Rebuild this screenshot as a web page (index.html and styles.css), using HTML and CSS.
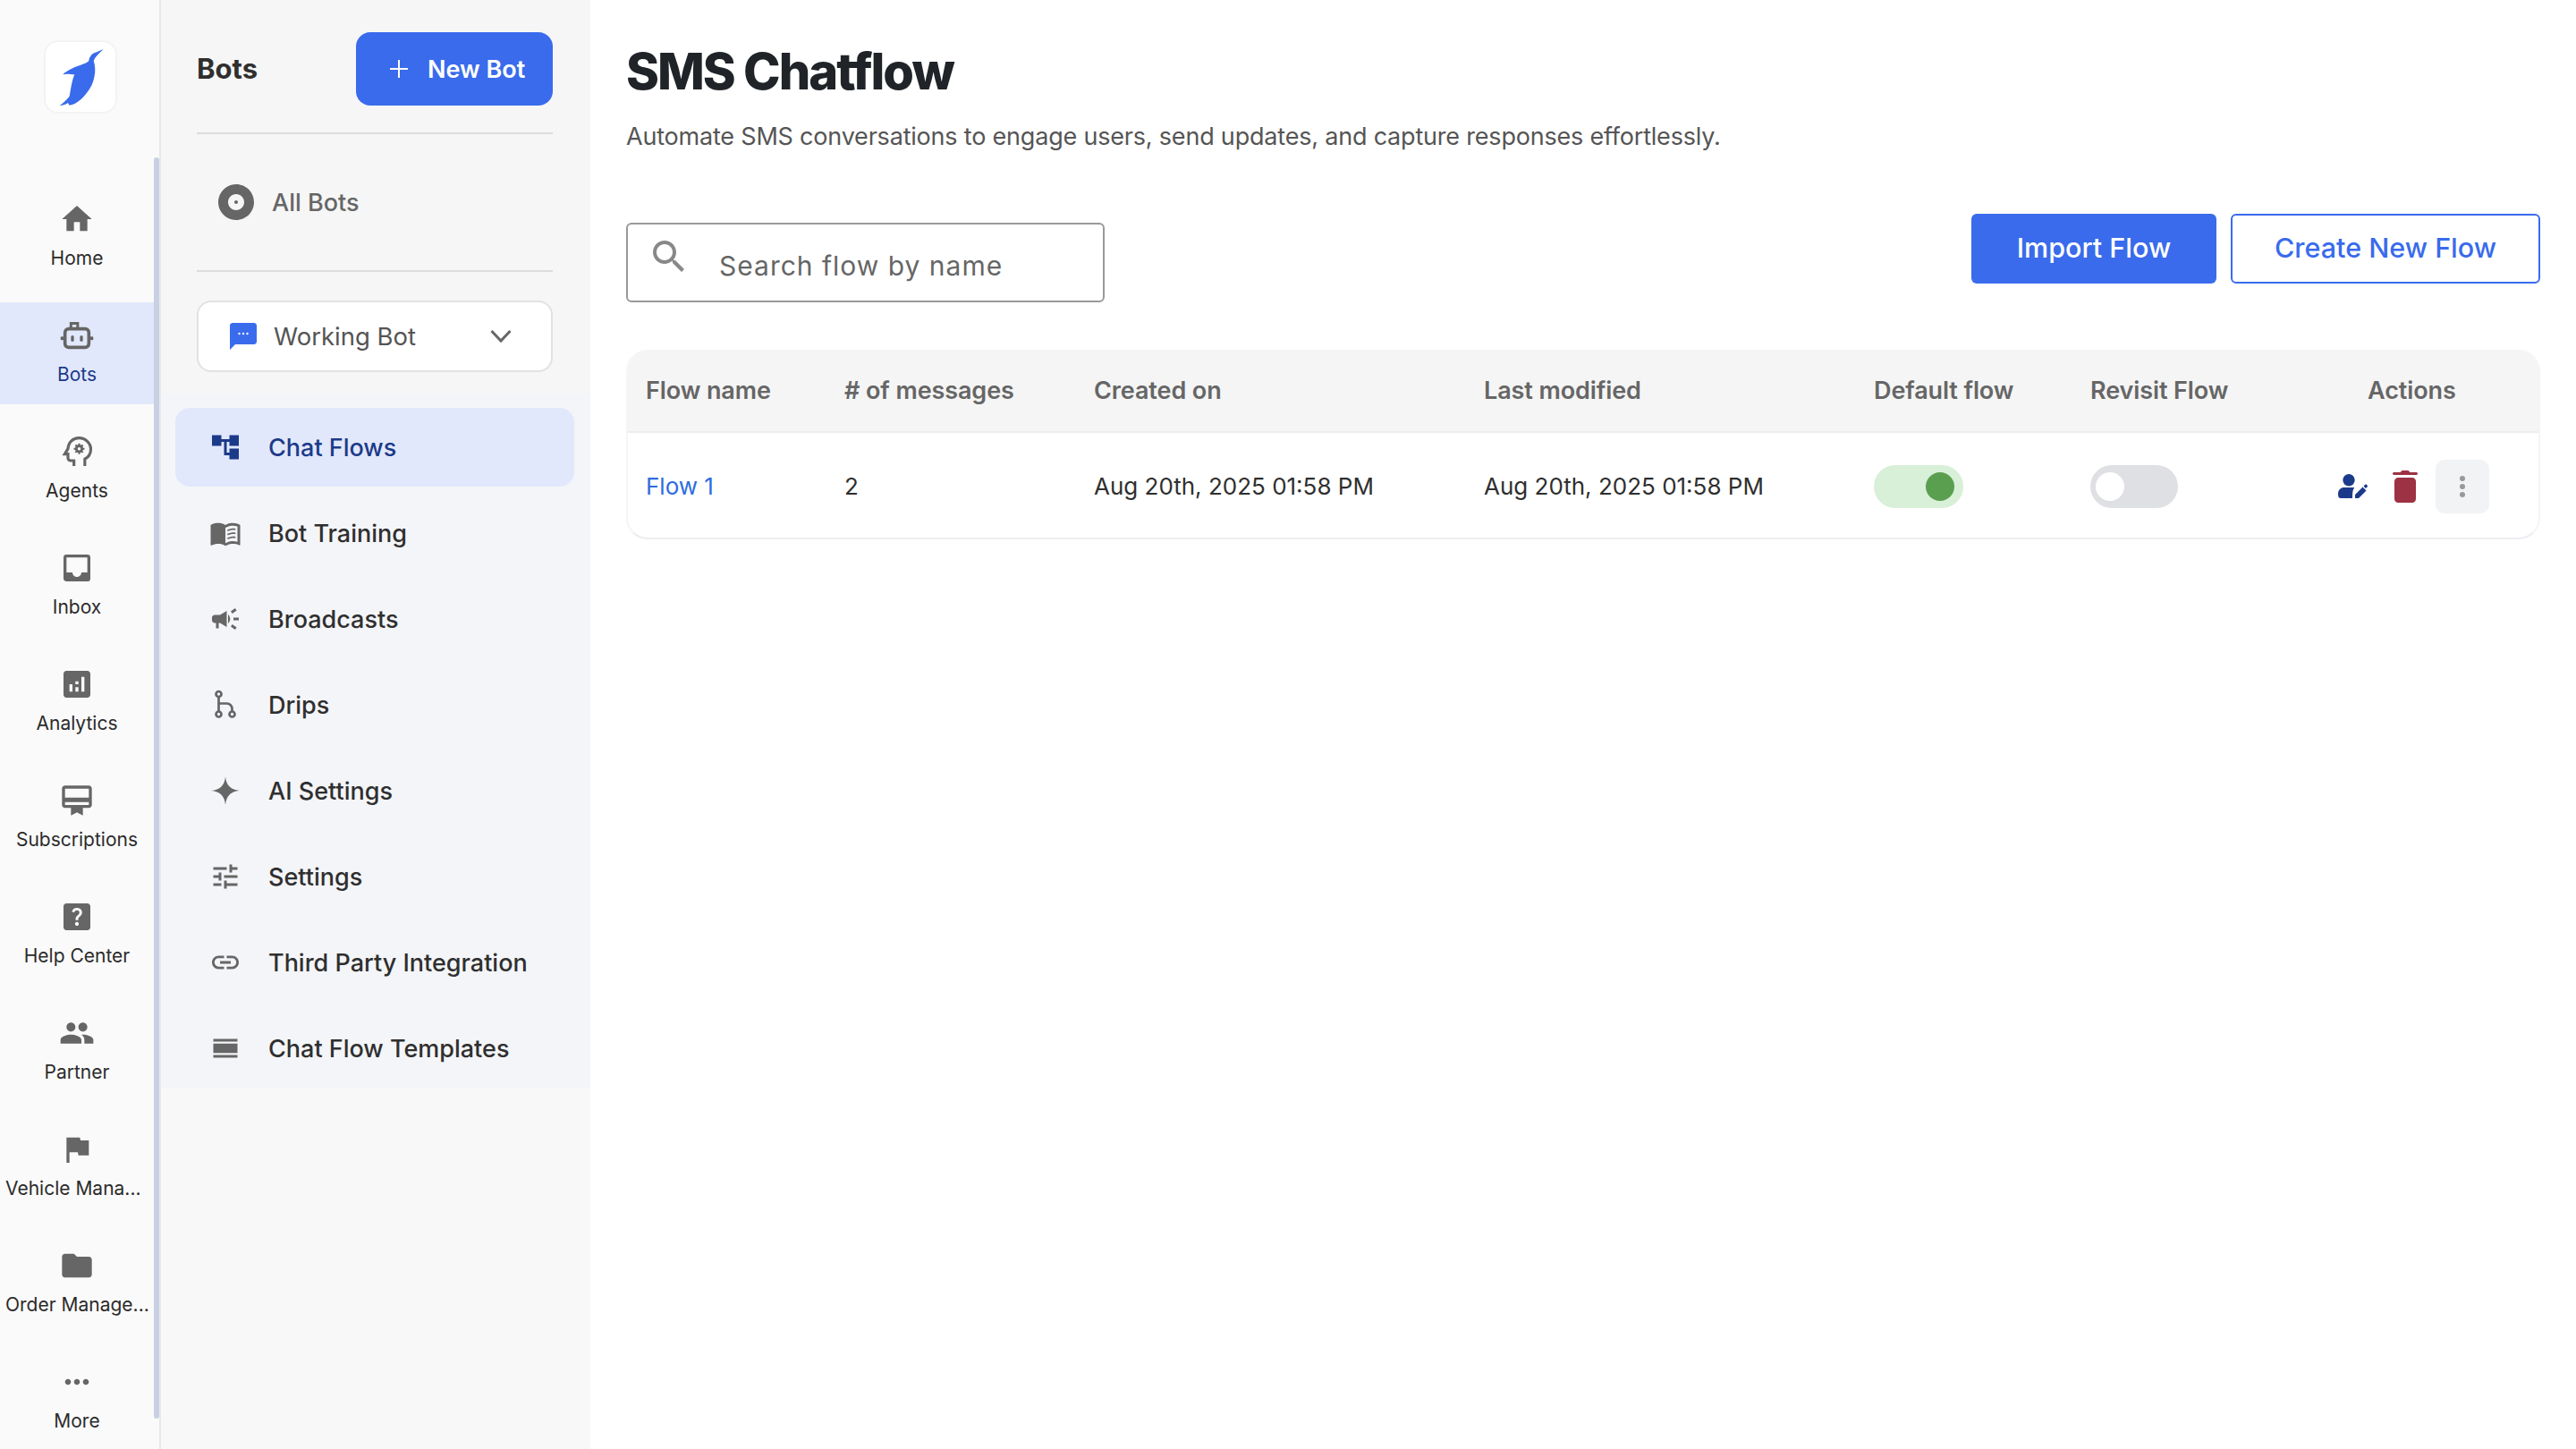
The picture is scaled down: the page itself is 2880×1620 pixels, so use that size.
FILE: index.html
```html
<!DOCTYPE html>
<html lang="en">
<head>
    <meta charset="UTF-8">
    <title>SMS Chatflow</title>
    <link rel="stylesheet" href="styles.css">
</head>
<body>
    <div class="app">
        <!-- Icon rail -->
        <aside class="rail">
            <div class="logo">
                <svg viewBox="88 75 242 245" width="81" height="81"><path fill="#396bec" d="M285 102 L262 112 C248 115 238 125 235 143 C225 152 190 160 170 172 C160 178 152 183 148 188 C158 185 170 186 187 188 C178 210 175 235 170 262 C160 275 148 285 137 293 C150 292 158 290 165 284 L170 292 C195 290 225 262 245 225 C258 195 260 165 252 143 C255 130 268 118 285 102 Z"/></svg>
            </div>
            <nav class="rail-nav">
                <a class="rail-item"><svg class="rail-icon" viewBox="0 0 24 24"><path d="M10 20v-6h4v6h5v-8h3L12 3 2 12h3v8z"/></svg><span class="rail-label">Home</span></a>
                <a class="rail-item active"><svg class="rail-icon" viewBox="0 0 24 24"><path fill="none" stroke="#666" stroke-width="1.800" d="M8 7.500V3.900h4.500v3.600"/><rect x="4" y="7.600" width="16" height="12.400" rx="2.500" fill="none" stroke="#666" stroke-width="2.200"/><rect x="8" y="12" width="2" height="4.200" rx="1"/><rect x="14" y="12" width="2" height="4.200" rx="1"/><rect x="1" y="12.800" width="2.200" height="2.400" rx=".8"/><rect x="20.800" y="12.800" width="2.200" height="2.400" rx=".8"/></svg><span class="rail-label">Bots</span></a>
                <a class="rail-item"><svg class="rail-icon" viewBox="0 0 24 24"><path fill="none" stroke="#666" stroke-width="1.900" d="M10 21.600V18H7.800C6.800 18 6 17.200 6 16.200V13.600H3.800L6 10C6.300 5.500 9.500 2.800 13.300 2.800c4.300 0 8 3.300 8 7.600 0 2.900-1.600 5.300-4 6.500v4.700"/><circle cx="13.500" cy="10" r="1.900" fill="none" stroke="#666" stroke-width="1.700"/><path fill="none" stroke="#666" stroke-width="1.200" d="M13.500 6.400v1.300M13.500 12.300v1.300M9.900 10h1.300M15.800 10h1.300M11 7.500l.9.900M15.100 11.600l.9.900M16 7.500l-.9.900M11.900 11.600l-.9.900"/></svg><span class="rail-label">Agents</span></a>
                <a class="rail-item"><svg class="rail-icon" viewBox="0 0 24 24"><path d="M19 3H5a2 2 0 0 0-2 2v14c0 1.100.9 2 2 2h14a2 2 0 0 0 2-2V5a2 2 0 0 0-2-2zm0 12h-4c0 1.660-1.340 3-3 3s-3-1.340-3-3H5V5h14v10z"/></svg><span class="rail-label">Inbox</span></a>
                <a class="rail-item"><svg class="rail-icon" viewBox="0 0 24 24"><path d="M19 3H5c-1.100 0-2 .9-2 2v14c0 1.100.9 2 2 2h14c1.100 0 2-.9 2-2V5c0-1.100-.9-2-2-2zM9 17H7v-5h2v5zm4 0h-2v-3h2v3zm0-5h-2v-2h2v2zm4 5h-2V7h2v10z"/></svg><span class="rail-label">Analytics</span></a>
                <a class="rail-item"><svg class="rail-icon" viewBox="0 0 24 24"><path d="M20 2H4c-1.110 0-2 .89-2 2v11c0 1.110.89 2 2 2h4v5l4-2 4 2v-5h4c1.110 0 2-.89 2-2V4c0-1.110-.89-2-2-2zm0 13H4v-2h16v2zm0-5H4V4h16v6z"/></svg><span class="rail-label">Subscriptions</span></a>
                <a class="rail-item"><svg class="rail-icon" viewBox="0 0 24 24"><path d="M19 3H5c-1.100 0-2 .9-2 2v14c0 1.100.9 2 2 2h14c1.100 0 2-.9 2-2V5c0-1.100-.9-2-2-2zm-6.990 15c-.7 0-1.260-.56-1.260-1.260 0-.71.56-1.250 1.260-1.250.71 0 1.250.54 1.250 1.250-.01.69-.54 1.260-1.250 1.260zm3.010-7.400c-.76 1.110-1.480 1.460-1.870 2.170-.16.29-.22.48-.22 1.410h-1.820c0-.49-.08-1.290.31-1.980.49-.87 1.420-1.390 1.960-2.160.57-.81.25-2.330-1.370-2.330-1.060 0-1.580.8-1.800 1.480l-1.650-.7C9.010 7.150 10.220 6 11.990 6c1.480 0 2.490.67 3.010 1.520.44.72.7 2.070.03 3.080z"/></svg><span class="rail-label">Help Center</span></a>
                <a class="rail-item"><svg class="rail-icon" viewBox="0 0 24 24"><path d="M16 11c1.660 0 2.990-1.340 2.990-3S17.660 5 16 5c-1.660 0-3 1.340-3 3s1.340 3 3 3zm-8 0c1.660 0 2.990-1.340 2.990-3S9.660 5 8 5C6.340 5 5 6.340 5 8s1.340 3 3 3zm0 2c-2.330 0-7 1.170-7 3.500V19h14v-2.500c0-2.330-4.670-3.500-7-3.500zm8 0c-.29 0-.62.02-.97.05 1.160.84 1.970 1.970 1.970 3.450V19h6v-2.500c0-2.330-4.670-3.500-7-3.500z"/></svg><span class="rail-label">Partner</span></a>
                <a class="rail-item"><svg class="rail-icon" viewBox="0 0 24 24"><path d="M14.400 6L14 4H5v17h2v-7h5.600l.4 2h7V6z"/></svg><span class="rail-label left">Vehicle Mana...</span></a>
                <a class="rail-item"><svg class="rail-icon" viewBox="0 0 24 24"><path d="M10 4H4c-1.100 0-1.990.9-1.990 2L2 18c0 1.100.9 2 2 2h16c1.100 0 2-.9 2-2V8c0-1.100-.9-2-2-2h-8l-2-2z"/></svg><span class="rail-label left">Order Manage...</span></a>
                <a class="rail-item"><svg class="rail-icon" viewBox="0 0 24 24"><path d="M6 10c-1.100 0-2 .9-2 2s.9 2 2 2 2-.9 2-2-.9-2-2-2zm12 0c-1.100 0-2 .9-2 2s.9 2 2 2 2-.9 2-2-.9-2-2-2zm-6 0c-1.100 0-2 .9-2 2s.9 2 2 2 2-.9 2-2-.9-2-2-2z"/></svg><span class="rail-label">More</span></a>
            </nav>
            <div class="rail-thumb"></div>
        </aside>

        <!-- Bot sidebar -->
        <aside class="sidebar">
            <div class="sidebar-top">
                <div class="sidebar-head">
                    <h2>Bots</h2>
                    <button class="new-bot" type="button">
                        <svg viewBox="0 0 20 20" width="20" height="20"><path fill="none" stroke="#fff" stroke-width="2" d="M10 0v20M0 10h20"/></svg>
                        New Bot
                    </button>
                </div>
                <a class="all-bots">
                    <svg viewBox="0 0 24 24" width="48" height="48"><path fill="#666" d="M12 2C6.480 2 2 6.480 2 12s4.480 10 10 10 10-4.480 10-10S17.520 2 12 2zm0 14.500c-2.490 0-4.500-2.010-4.500-4.500S9.510 7.500 12 7.500s4.500 2.010 4.500 4.500-2.010 4.500-4.500 4.500zm0-5.500c-.55 0-1 .45-1 1s.45 1 1 1 1-.45 1-1-.45-1-1-1z"/></svg>
                    All Bots
                </a>
                <div class="bot-select">
                    <svg viewBox="0 0 24 24" width="36" height="36"><path fill="#396bec" d="M20 2H4c-1.100 0-1.990.9-1.990 2L2 22l4-4h14c1.100 0 2-.9 2-2V4c0-1.100-.9-2-2-2z"/><circle cx="9" cy="10" r=".8" fill="#fff"/><circle cx="12" cy="10" r=".8" fill="#fff"/><circle cx="15" cy="10" r=".8" fill="#fff"/></svg>
                    <span class="bot-name">Working Bot</span>
                    <svg viewBox="0 0 24 16" width="24" height="16"><path fill="none" stroke="#666" stroke-width="3" d="M1.500 2L12 13 22.500 2"/></svg>
                </div>
            </div>
            <nav class="menu">
                <a class="menu-item active"><svg class="menu-icon" viewBox="0 0 24 24"><path d="M22 11V3h-7v3H9V3H2v8h7V8h2v10h4v3h7v-8h-7v3h-2V8h2v3z"/></svg>Chat Flows</a>
                <a class="menu-item"><svg class="menu-icon" viewBox="0 0 24 24"><path d="M21 5c-1.110-.35-2.330-.5-3.500-.5-1.950 0-4.050.4-5.500 1.500-1.450-1.100-3.550-1.500-5.500-1.500S2.450 4.900 1 6v14.650c0 .25.25.5.5.5.1 0 .15-.05.25-.05C3.100 20.450 5.050 20 6.500 20c1.950 0 4.050.4 5.500 1.500 1.350-.85 3.800-1.500 5.500-1.500 1.650 0 3.350.3 4.750 1.050.1.05.15.05.25.05.25 0 .5-.25.5-.5V6c-.6-.45-1.250-.75-2-1zm0 13.500c-1.100-.35-2.300-.5-3.500-.5-1.700 0-4.150.65-5.500 1.500V8c1.350-.85 3.800-1.500 5.500-1.500 1.200 0 2.400.15 3.500.5v11.500z"/><path d="M13.500 9.500c1.500-.8 4.500-1.300 6-.9v1.200c-1.700-.4-4.500.1-6 .9zm0 3c1.500-.8 4.500-1.300 6-.9v1.200c-1.700-.4-4.500.1-6 .9zm0 3c1.500-.8 4.500-1.300 6-.9v1.200c-1.700-.4-4.500.1-6 .9z"/></svg>Bot Training</a>
                <a class="menu-item"><svg class="menu-icon" viewBox="0 0 24 24"><path d="M18 11v2h4v-2h-4zm-2 6.610c.96.71 2.210 1.650 3.200 2.390.4-.53.8-1.070 1.200-1.600-.99-.74-2.240-1.680-3.200-2.400-.4.54-.8 1.080-1.200 1.610zM20.400 5.600c-.4-.53-.8-1.070-1.200-1.600-.99.74-2.240 1.680-3.200 2.400.4.53.8 1.070 1.200 1.600.96-.72 2.210-1.650 3.200-2.400zM4 9c-1.100 0-2 .9-2 2v2c0 1.100.9 2 2 2h1v4h2v-4h1l5 3V6L8 9H4zm11.500 3c0-1.330-.58-2.530-1.500-3.350v6.690c.92-.81 1.500-2.010 1.500-3.340z"/></svg>Broadcasts</a>
                <a class="menu-item"><svg class="menu-icon" viewBox="0 0 24 24"><g fill="none" stroke="#666" stroke-width="1.800"><circle cx="7" cy="4" r="2"/><circle cx="7" cy="19" r="2"/><circle cx="17" cy="19" r="2"/><path d="M7 6v11M7 11h6a4 4 0 0 1 4 4v2"/></g></svg>Drips</a>
                <a class="menu-item"><svg class="menu-icon" viewBox="0 0 24 24"><path d="M12 1.500C12.600 8 16 11.400 22.500 12 16 12.600 12.600 16 12 22.500 11.400 16 8 12.600 1.500 12 8 11.400 11.400 8 12 1.500z"/></svg>AI Settings</a>
                <a class="menu-item"><svg class="menu-icon" viewBox="0 0 24 24"><path d="M3 17v2h6v-2H3zM3 5v2h10V5H3zm10 16v-2h8v-2h-8v-2h-2v6h2zM7 9v2H3v2h4v2h2V9H7zm14 4v-2H11v2h10zm-6-4h2V7h4V5h-4V3h-2v6z"/></svg>Settings</a>
                <a class="menu-item"><svg class="menu-icon" viewBox="0 0 24 24"><path d="M3.900 12c0-1.710 1.390-3.100 3.100-3.100h4V7H7c-2.760 0-5 2.240-5 5s2.240 5 5 5h4v-1.900H7c-1.710 0-3.100-1.390-3.100-3.100zM8 13h8v-2H8v2zm9-6h-4v1.900h4c1.710 0 3.100 1.390 3.100 3.100s-1.390 3.100-3.100 3.100h-4V17h4c2.760 0 5-2.240 5-5s-2.240-5-5-5z"/></svg>Third Party Integration</a>
                <a class="menu-item"><svg class="menu-icon" viewBox="0 0 24 24"><rect x="3" y="5" width="18" height="2"/><rect x="3" y="8.500" width="18" height="7"/><rect x="3" y="17" width="18" height="2"/></svg>Chat Flow Templates</a>
            </nav>
        </aside>

        <!-- Main content -->
        <main class="main">
            <h1>SMS Chatflow</h1>
            <p class="subtitle">Automate SMS conversations to engage users, send updates, and capture responses effortlessly.</p>

            <div class="toolbar">
                <label class="search">
                    <svg viewBox="0 0 24 24" width="48" height="48"><path fill="#888" d="M15.500 14h-.79l-.28-.27C15.410 12.590 16 11.110 16 9.500 16 5.910 13.090 3 9.500 3S3 5.910 3 9.500 5.910 16 9.500 16c1.610 0 3.090-.59 4.230-1.570l.27.28v.79l5 4.990L20.490 19l-4.990-5zm-6 0C7.010 14 5 11.990 5 9.500S7.010 5 9.500 5 14 7.010 14 9.500 11.990 14 9.500 14z"/></svg>
                    <input type="text" placeholder="Search flow by name">
                </label>
                <div class="toolbar-buttons">
                    <button class="btn btn-primary" type="button">Import Flow</button>
                    <button class="btn btn-outline" type="button">Create New Flow</button>
                </div>
            </div>

            <div class="table-wrap">
                <table class="flows">
                    <thead>
                        <tr>
                            <th class="col-name">Flow name</th>
                            <th class="col-count"># of messages</th>
                            <th class="col-date">Created on</th>
                            <th class="col-date">Last modified</th>
                            <th class="col-default">Default flow</th>
                            <th class="col-revisit">Revisit Flow</th>
                            <th class="col-actions">Actions</th>
                        </tr>
                    </thead>
                    <tbody>
                        <tr>
                            <td><a class="flow-link">Flow 1</a></td>
                            <td>2</td>
                            <td>Aug 20th, 2025 01:58 PM</td>
                            <td>Aug 20th, 2025 01:58 PM</td>
                            <td><span class="toggle on"><span class="knob"></span></span></td>
                            <td><span class="toggle"><span class="knob"></span></span></td>
                            <td class="cell-actions">
                                <div class="actions">
                                    <svg viewBox="0 0 33 27" width="33" height="27"><circle cx="12" cy="6.700" r="6.700" fill="#1c3a8a"/><path fill="#1c3a8a" d="M0 22.500C0 17.500 3 15 7 15h11.500c-1.500 1.500-2.500 4-2.500 12H3c-2 0-3-1.500-3-4.500z"/><path fill="#1c3a8a" d="M19 27v-4l8.500-8.500 4 4L23 27zM28.500 13.500l1.500-1.500c.6-.6 1.400-.6 2 0l.5.5c.6.6.6 1.400 0 2l-1.500 1.500z"/></svg>
                                    <svg viewBox="0 0 28 36" width="28" height="36"><path fill="#9c3243" d="M9 2c0-1 1-2 2-2h6c1 0 2 1 2 2h7.500c.8 0 1.500.7 1.500 1.500S27.300 5 26.500 5h-25C.7 5 0 4.300 0 3.500S.7 2 1.500 2zM6 8h16c2 0 4 2 4 4v20c0 2-2 4-4 4H6c-2 0-4-2-4-4V12c0-2 2-4 4-4z"/></svg>
                                    <span class="kebab"><i></i><i></i><i></i></span>
                                </div>
                            </td>
                        </tr>
                    </tbody>
                </table>
            </div>
        </main>
    </div>
</body>
</html>
```

FILE: styles.css
```css
* {
    box-sizing: border-box;
}
html, body {
    margin: 0;
    height: 100%;
    overflow: hidden;
}
body {
    background-color: #fff;
    color: #2f2f2f;
    font-family: 'Inter', 'Liberation Sans', sans-serif;
}
h1, h2, p {
    margin: 0;
}
.app {
    display: flex;
    height: 1620px;
}

/* Icon rail */
.rail {
    position: relative;
    flex: 0 0 180px;
    background-color: #fafafa;
    border-right: 2px solid #e8e8e8;
}
.logo {
    display: flex;
    align-items: center;
    justify-content: center;
    width: 82px;
    height: 82px;
    margin: 45px 0 81px 49px;
    background-color: #fff;
    border: 2px solid #f3f3f3;
    border-radius: 16px;
}
.logo svg {
    flex: none;
}
.rail-nav {
    display: flex;
    flex-direction: column;
    gap: 16px;
    width: 172px;
}
.rail-item {
    display: flex;
    flex-direction: column;
    align-items: center;
    height: 114px;
    padding: 17px 0 0 6px;
}
.rail-item.active {
    background-color: #e2e8fb;
}
.rail-icon {
    flex: none;
    width: 40px;
    height: 40px;
    margin-right: 6px;
    fill: #666;
}
.rail-label {
    width: 100%;
    padding-right: 6px;
    margin-top: 8px;
    font-size: 21px;
    line-height: 32px;
    color: #2b2b2b;
    text-align: center;
    white-space: nowrap;
}
.rail-label.left {
    padding-right: 0;
    text-align: left;
}
.rail-item.active .rail-label {
    color: #1c3a8a;
}
.rail-thumb {
    position: absolute;
    top: 176px;
    left: 172px;
    width: 6px;
    height: 1410px;
    background-color: #c8d0e4;
    border-radius: 4px;
}

/* Bot sidebar */
.sidebar {
    flex: 0 0 480px;
    background-color: #f8f8f8;
}
.sidebar-top {
    height: 440px;
    padding: 36px 42px 0 40px;
    background-color: #f6f6f6;
}
.sidebar-head {
    display: flex;
    align-items: center;
    justify-content: space-between;
    padding-bottom: 30px;
    border-bottom: 2px solid #dcdcdc;
}
.sidebar-head h2 {
    margin-top: -2px;
    font-size: 31px;
    font-weight: 700;
    color: #2f2f2f;
}
.new-bot {
    display: flex;
    align-items: center;
    gap: 22px;
    width: 220px;
    height: 82px;
    padding-left: 38px;
    font: 600 27px 'Inter', sans-serif;
    color: #fff;
    background-color: #396bec;
    border: none;
    border-radius: 16px;
}
.all-bots {
    display: flex;
    align-items: center;
    gap: 16px;
    height: 154px;
    padding-left: 20px;
    font-size: 27px;
    font-weight: 500;
    color: #666;
    border-bottom: 2px solid #dcdcdc;
}
.bot-select {
    display: flex;
    align-items: center;
    height: 80px;
    margin-top: 32px;
    padding: 0 44px 0 32px;
    background-color: #fff;
    border: 2px solid #e2e2e2;
    border-radius: 16px;
}
.bot-name {
    flex: 1;
    margin-left: 16px;
    font-size: 27.500px;
    color: #555;
}
.menu {
    display: flex;
    flex-direction: column;
    gap: 8px;
    height: 776px;
    padding: 16px 18px 0 16px;
    background-color: #f4f5f8;
}
.menu-item {
    display: flex;
    align-items: center;
    gap: 30px;
    height: 88px;
    padding-left: 38px;
    font-size: 27px;
    font-weight: 500;
    color: #2f2f2f;
    border-radius: 16px;
}
.menu-item.active {
    color: #1c3a8a;
    background-color: #e2e8fb;
}
.menu-icon {
    flex: none;
    width: 36px;
    height: 36px;
    fill: #666;
}
.menu-item.active .menu-icon {
    fill: #1c3a8a;
}

/* Main */
.main {
    flex: 1;
    padding: 0 40px;
}
.main h1 {
    padding-top: 44px;
    font-size: 56px;
    line-height: 72px;
    font-weight: 800;
    letter-spacing: -2px;
    color: #202428;
}
.subtitle {
    margin-top: 19px;
    font-size: 27px;
    line-height: 36px;
    letter-spacing: -.2px;
    color: #555;
}
.toolbar {
    display: flex;
    justify-content: space-between;
    align-items: flex-start;
    margin-top: 68px;
}
.search {
    display: flex;
    align-items: center;
    width: 535px;
    height: 89px;
    margin-top: 10px;
    padding-left: 22px;
    background-color: #fff;
    border: 2px solid #999;
    border-radius: 6px;
}
.search svg {
    margin-top: -14px;
}
.search input {
    flex: 1;
    min-width: 0;
    margin-left: 30px;
    margin-top: 6px;
    border: none;
    outline: none;
    background: none;
    font: 400 30px 'Inter', sans-serif;
    letter-spacing: 1px;
}
.search input::placeholder {
    color: #666;
    opacity: 1;
}
.toolbar-buttons {
    display: flex;
    gap: 16px;
}
.btn {
    height: 78px;
    padding-bottom: 4px;
    font: 500 30.500px 'Inter', sans-serif;
    border-radius: 6px;
}
.btn-primary {
    width: 274px;
    color: #fff;
    background-color: #396bec;
    border: none;
}
.btn-outline {
    width: 346px;
    color: #396bec;
    background-color: #fff;
    border: 2px solid #396bec;
}

/* Flow table */
.table-wrap {
    margin-top: 53px;
    border-radius: 24px;
    overflow: hidden;
    border: 2px solid #f5f5f6;
    border-top: none;
    border-bottom-color: #ecedf1;
}
.flows {
    width: 100%;
    border-collapse: collapse;
    table-layout: fixed;
}
.flows th {
    height: 92px;
    padding: 0 0 0 20px;
    font-size: 27px;
    font-weight: 600;
    letter-spacing: -.1px;
    color: #666;
    text-align: left;
    background-color: #f5f5f5;
    border-bottom: 2px solid #ecedf1;
}
.flows td {
    height: 118px;
    padding: 2px 0 0 20px;
    font-size: 26px;
    color: #2f2f2f;
}
.col-name { width: 222px; }
.col-count { width: 279px; }
.col-date { width: 436px; }
.col-default { width: 242px; }
.col-revisit { width: 275px; }
.flows .col-actions { padding-left: 55px; }
.flows .cell-actions { padding-left: 22px; }
.flow-link {
    color: #2d6cdf;
}
.toggle {
    display: block;
    width: 98px;
    height: 48px;
    padding: 8px 6px;
    background-color: #dfe0e4;
    border-radius: 24px;
}
.toggle.on {
    width: 100px;
    background-color: #d8efd8;
}
.knob {
    display: block;
    width: 32px;
    height: 32px;
    background-color: #fff;
    border-radius: 50%;
}
.toggle.on .knob {
    margin-left: 52px;
    background-color: #5a9f4f;
}
.actions {
    display: flex;
    align-items: center;
    gap: 28px;
}
.kebab {
    display: flex;
    flex-direction: column;
    align-items: center;
    justify-content: center;
    gap: 3px;
    width: 60px;
    height: 60px;
    margin-left: -8px;
    background-color: #f2f3f5;
    border-radius: 10px;
}
.kebab i {
    display: block;
    width: 6px;
    height: 6px;
    background-color: #999;
    border-radius: 50%;
}
```
